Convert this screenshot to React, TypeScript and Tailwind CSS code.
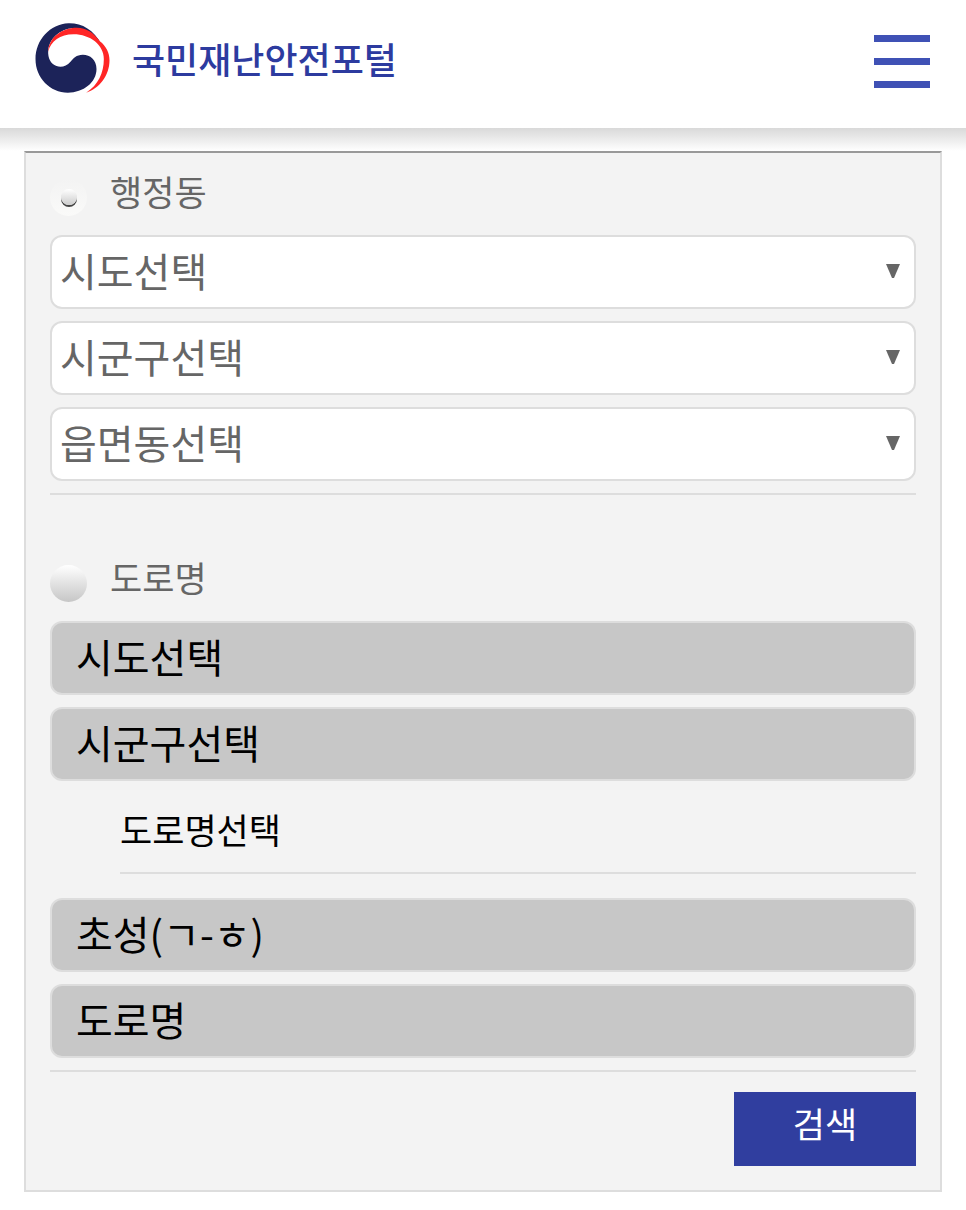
import clsx from "clsx";
import { useState, type ReactNode } from "react";

interface FieldSelectProps {
  label: string;
  disabled?: boolean;
}

function FieldSelect({ label, disabled }: FieldSelectProps) {
  return (
    <div className="relative">
      <select
        aria-label={label}
        disabled={disabled}
        className={clsx(
          "block h-[74px] w-full appearance-none rounded-xl border-2 border-[#dddddd] pb-1 text-[40px] leading-[60px] opacity-100",
          disabled ? "bg-[#c7c7c7] px-6 text-black" : "bg-white px-2 text-[#666666]"
        )}
      >
        <option>{label}</option>
      </select>
      {!disabled && (
        <svg
          viewBox="0 0 14 14"
          className="pointer-events-none absolute top-[29px] right-4 size-[14px]"
          fill="#666666"
          aria-hidden="true"
        >
          <path d="M0 0h14L8 14H6Z" />
        </svg>
      )}
    </div>
  );
}

interface ModeRadioProps {
  value: string;
  checked: boolean;
  onChange: (value: string) => void;
  children: ReactNode;
}

function ModeRadio({ value, checked, onChange, children }: ModeRadioProps) {
  return (
    <label className="flex h-12 items-start gap-[23px] text-[35px] leading-[48px] text-[#666666]">
      <input
        type="radio"
        name="searchMode"
        value={value}
        checked={checked}
        onChange={() => onChange(value)}
        className="mt-3 flex size-[37px] shrink-0 appearance-none items-center justify-center rounded-full bg-linear-to-b from-white to-[#c6c6c6] pb-[2px] checked:from-[#f3f3f3] checked:to-[#fafaf9] checked:before:size-4 checked:before:rounded-full checked:before:bg-linear-to-b checked:before:from-white checked:before:to-[#cccccc] checked:before:shadow-[0_2px_0_#444444] checked:before:content-['']"
      />
      {children}
    </label>
  );
}

function Logo() {
  return (
    <svg viewBox="15 22 224 210" className="h-[70px] w-[75px]" aria-hidden="true">
      <path
        fill="#1c2359"
        d="M214 86C190 42 155 22 115 23C60 25 16 73 16 130C16 187 60 231 113 231C160 231 199 200 199 160C199 132 180 117 158 117C138 117 130 128 121 138C109 152 93 156 79 151C61 144 53 127 54 105C58 62 98 37 135 37C165 38 190 54 214 86Z"
      />
      <path
        fill="#ff2626"
        d="M54 108C56 65 95 36 140 36C169 36 193 53 209 77C228 91 238 112 238 134C238 180 207 219 168 231C204 208 221 172 221 130C221 88 180 56 130 56C90 56 62 76 54 108Z"
      />
    </svg>
  );
}

export default function App() {
  const [mode, setMode] = useState("dong");

  return (
    <div className="bg-white pb-5 font-['Noto_Sans_CJK_KR',sans-serif] font-normal">
      <header className="flex h-32 items-start justify-between pt-[23px] pr-9 pl-[35px]">
        <a href="#" className="flex items-center gap-[22px]">
          <Logo />
          <span className="text-[36px] leading-[48px] font-medium text-[#2d3b9f]">
            국민재난안전포털
          </span>
        </a>
        <button
          type="button"
          aria-label="메뉴"
          className="mt-3 flex w-14 flex-col gap-4"
        >
          <span className="h-[7px] w-full bg-[#3f51b5]" />
          <span className="h-[7px] w-full bg-[#3f51b5]" />
          <span className="h-[7px] w-full bg-[#3f51b5]" />
        </button>
      </header>
      <div className="h-[23px] bg-linear-to-b from-[#d9d9d9] to-white" />

      <main className="px-6">
        <form
          className="border-2 border-[#dddddd] border-t-[#999999] bg-[#f3f3f3] px-6 pt-[14px] pb-6"
          onSubmit={(e) => e.preventDefault()}
        >
          <section>
            <ModeRadio value="dong" checked={mode === "dong"} onChange={setMode}>
              행정동
            </ModeRadio>
            <div className="mt-5 flex flex-col gap-3 border-b-2 border-[#dddddd] pb-3">
              <FieldSelect label="시도선택" />
              <FieldSelect label="시군구선택" />
              <FieldSelect label="읍면동선택" />
            </div>
          </section>

          <section className="pt-[58px]">
            <ModeRadio value="road" checked={mode === "road"} onChange={setMode}>
              도로명
            </ModeRadio>
            <div className="mt-5 border-b-2 border-[#dddddd] pb-3">
              <div className="flex flex-col gap-3">
                <FieldSelect label="시도선택" disabled />
                <FieldSelect label="시군구선택" disabled />
              </div>
              <p className="mt-3 mb-6 ml-[70px] h-[81px] border-b-2 border-[#dddddd] pt-3 text-[35px] leading-[48px] text-black">
                도로명선택
              </p>
              <div className="flex flex-col gap-3">
                <FieldSelect label="초성(ㄱ-ㅎ)" disabled />
                <FieldSelect label="도로명" disabled />
              </div>
            </div>
          </section>

          <div className="mt-5 flex justify-end">
            <button
              type="submit"
              className="h-[74px] w-[182px] bg-[#303e9f] pb-3 text-[35px] leading-[48px] text-white"
            >
              검색
            </button>
          </div>
        </form>
      </main>
    </div>
  );
}
